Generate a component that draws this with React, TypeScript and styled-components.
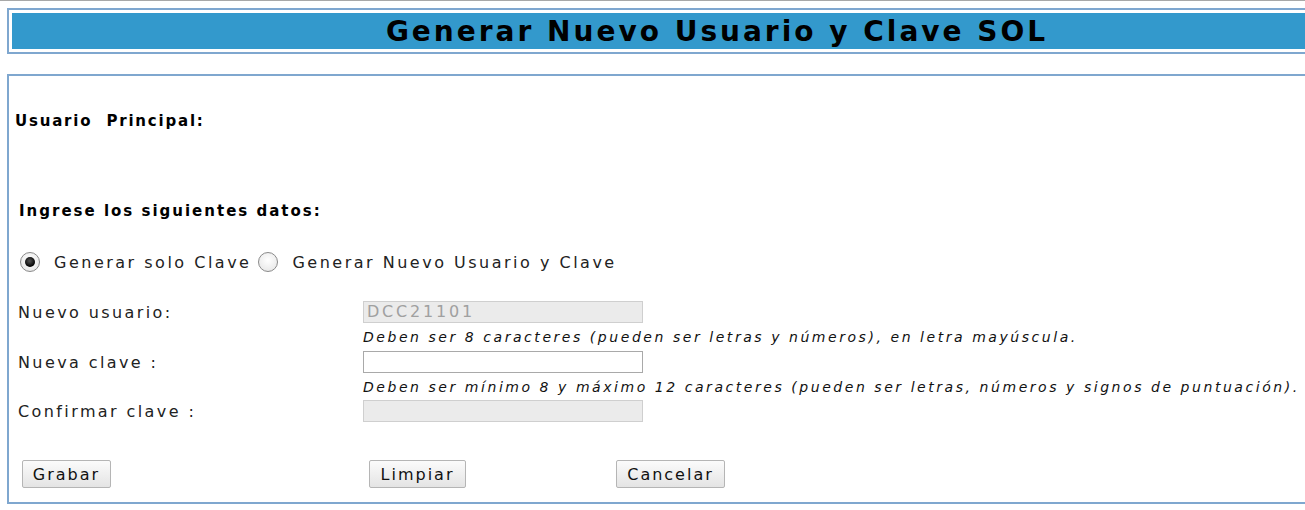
import React from "react";
import styled, { createGlobalStyle } from "styled-components";

const GlobalStyle = createGlobalStyle`
  html, body {
    margin: 0;
    padding: 0;
    background: #ffffff;
    overflow: hidden;
  }
  body {
    font-family: "DejaVu Sans", Verdana, sans-serif;
    color: #111;
  }
`;

const Page = styled.div`
  border-top: 1px solid #a8a8a8;
  padding: 7px 0 0 7px;
  width: 1440px;
  display: flex;
  flex-direction: column;
  gap: 20px;
`;

const HeaderBox = styled.div`
  border: 2px solid #7fa7cf;
  padding: 3px;
  background: #fff;
`;

const HeaderBar = styled.div`
  background: #3399cc;
  height: 36px;
  display: flex;
  align-items: center;
  justify-content: center;
`;

const Title = styled.h1`
  margin: 0 0 0 -20px;
  font-size: 28px;
  font-weight: bold;
  letter-spacing: 3px;
  color: #000;
`;

const Panel = styled.div`
  border: 2px solid #7fa7cf;
  height: 426px;
  padding-left: 6px;
  display: flex;
  flex-direction: column;
`;

const StrongLine = styled.div<{ $top: number; $indent: number; $spacing: number }>`
  margin-top: ${(p) => p.$top}px;
  padding-left: ${(p) => p.$indent}px;
  height: 32px;
  line-height: 32px;
  font-size: 15px;
  font-weight: bold;
  letter-spacing: ${(p) => p.$spacing}px;
  white-space: pre;
  color: #000;
`;

const RadioRow = styled.div`
  margin-top: 20px;
  padding-left: 5px;
  height: 30px;
  display: flex;
  align-items: center;
  font-size: 16px;
  letter-spacing: 2.5px;
  color: #222;
`;

const RadioLabel = styled.label`
  display: flex;
  align-items: center;
  gap: 14px;
  margin-right: 7px;
`;

const RadioDot = styled.span<{ $checked?: boolean }>`
  width: 20px;
  height: 20px;
  border-radius: 50%;
  box-sizing: border-box;
  border: 1px solid #8a8a8a;
  background: radial-gradient(circle at 50% 40%, #ffffff 0%, #e3e3e3 100%);
  display: flex;
  align-items: center;
  justify-content: center;
  &::after {
    content: "";
    width: 10px;
    height: 10px;
    border-radius: 50%;
    background: ${(p) => (p.$checked ? "radial-gradient(circle at 45% 40%, #555 0%, #000 70%)" : "transparent")};
  }
`;

const FormGrid = styled.div`
  margin-top: 24px;
  padding-left: 3px;
  display: grid;
  grid-template-columns: 345px 1fr;
  grid-template-rows: 22px 28px 22px 27px 22px;
  align-items: center;
`;

const FieldLabel = styled.div`
  font-size: 16px;
  letter-spacing: 2.4px;
  color: #222;
`;

const TextBox = styled.div<{ $disabled?: boolean }>`
  width: 280px;
  height: 22px;
  box-sizing: border-box;
  border: 1px solid ${(p) => (p.$disabled ? "#cfcfcf" : "#a9a9a9")};
  background: ${(p) => (p.$disabled ? "#ebebeb" : "#ffffff")};
  color: #a0a0a0;
  font-size: 16px;
  letter-spacing: 2.8px;
  line-height: 20px;
  padding-left: 3px;
`;

const Note = styled.div`
  grid-column: 2;
  font-size: 14px;
  font-style: italic;
  letter-spacing: 2.55px;
  color: #111;
  white-space: nowrap;
`;

const ButtonRow = styled.div`
  margin-top: 38px;
  padding-left: 7px;
  display: grid;
  grid-template-columns: 347px 247px auto;
  align-items: center;
`;

const Button = styled.button<{ $w: number }>`
  width: ${(p) => p.$w}px;
  height: 28px;
  justify-self: start;
  border: 1px solid #b5b5b5;
  border-radius: 2px;
  background: linear-gradient(#fbfbfb, #e4e4e4);
  font-family: "DejaVu Sans", Verdana, sans-serif;
  font-size: 16px;
  letter-spacing: 2px;
  color: #111;
  padding: 0;
`;

export default function App() {
  return (
    <>
      <GlobalStyle />
      <Page>
        <HeaderBox>
          <HeaderBar>
            <Title>Generar Nuevo Usuario y Clave SOL</Title>
          </HeaderBar>
        </HeaderBox>
        <Panel>
          <StrongLine $top={29} $indent={0} $spacing={1.8}>{"Usuario  Principal:"}</StrongLine>
          <StrongLine $top={58} $indent={4} $spacing={2}>Ingrese los siguientes datos:</StrongLine>
          <RadioRow>
            <RadioLabel>
              <RadioDot $checked />
              Generar solo Clave
            </RadioLabel>
            <RadioLabel>
              <RadioDot />
              Generar Nuevo Usuario y Clave
            </RadioLabel>
          </RadioRow>
          <FormGrid>
            <FieldLabel>Nuevo usuario:</FieldLabel>
            <TextBox $disabled>DCC21101</TextBox>
            <Note>Deben ser 8 caracteres (pueden ser letras y números), en letra mayúscula.</Note>
            <FieldLabel>Nueva clave :</FieldLabel>
            <TextBox />
            <Note>
              Deben ser mínimo 8 y máximo 12 caracteres (pueden ser letras, números y signos de puntuación).
            </Note>
            <FieldLabel>Confirmar clave :</FieldLabel>
            <TextBox $disabled />
          </FormGrid>
          <ButtonRow>
            <Button $w={89}>Grabar</Button>
            <Button $w={97}>Limpiar</Button>
            <Button $w={109}>Cancelar</Button>
          </ButtonRow>
        </Panel>
      </Page>
    </>
  );
}
